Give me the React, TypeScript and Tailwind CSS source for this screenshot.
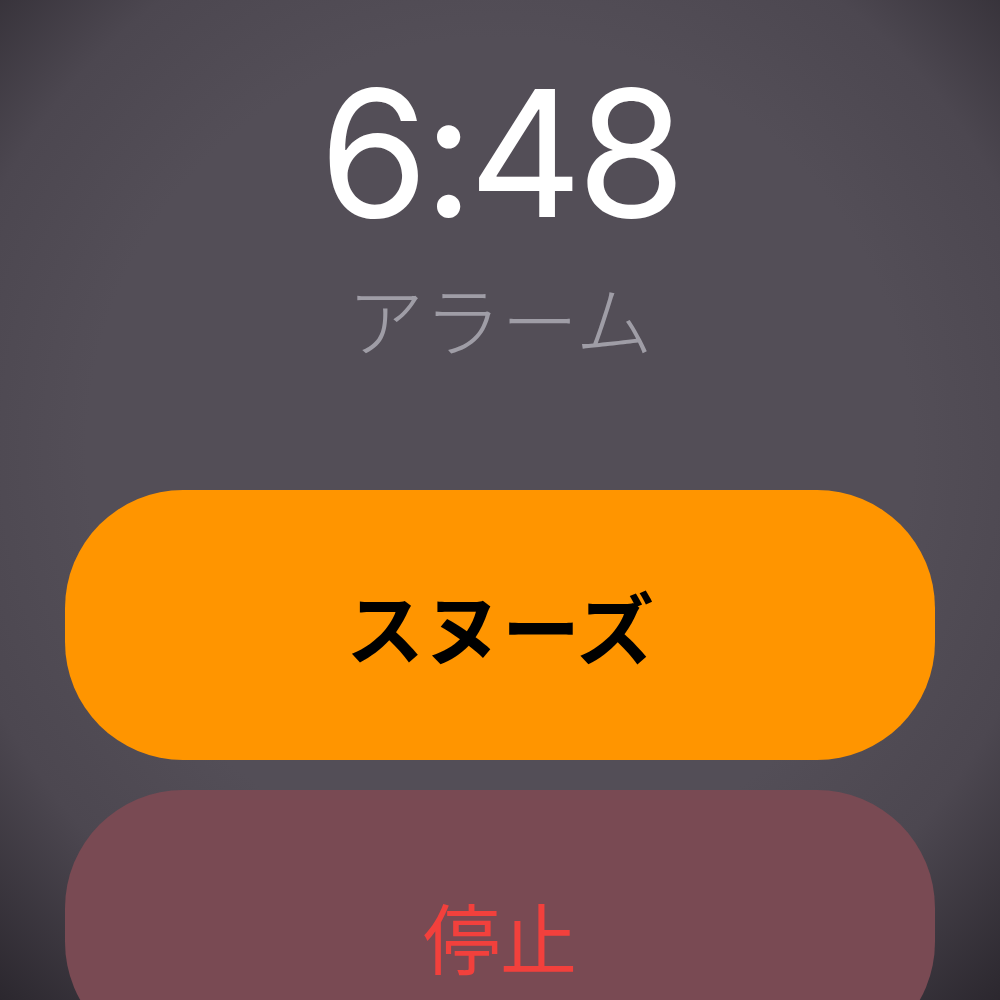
import React from "react";

export default function App() {
  return (
    <div className="relative w-[1000px] h-[1000px] overflow-hidden bg-[#504b54]">
      <div className="flex flex-col items-center w-full h-full bg-[radial-gradient(ellipse_75%_75%_at_50%_45%,#534e57_55%,#4c4750_75%,#2a262d_100%)]">
        <div className="pt-[65px] text-[176px] leading-none text-white tracking-[-0.03em] font-normal [font-family:Inter,'Noto_Sans',sans-serif]">
          6:48
        </div>
        <div className="mt-[38px] text-[77px] leading-none text-[#9f9da6] font-light [font-family:'Noto_Sans_CJK_JP',sans-serif]">
          アラーム
        </div>
        <div className="mt-[134px] w-[870px] h-[270px] shrink-0 rounded-[118px] bg-[#ff9500] flex items-center justify-center">
          <span className="text-[78px] leading-none text-black font-bold [font-family:'Noto_Sans_CJK_JP',sans-serif]">
            スヌーズ
          </span>
        </div>
        <div className="mt-[30px] w-[870px] h-[270px] shrink-0 rounded-[118px] bg-[#794a53] flex items-center justify-center">
          <span className="text-[77px] leading-none text-[#f2403c] font-normal [font-family:'Noto_Sans_CJK_JP',sans-serif] pt-[20px]">
            停止
          </span>
        </div>
      </div>
    </div>
  );
}
